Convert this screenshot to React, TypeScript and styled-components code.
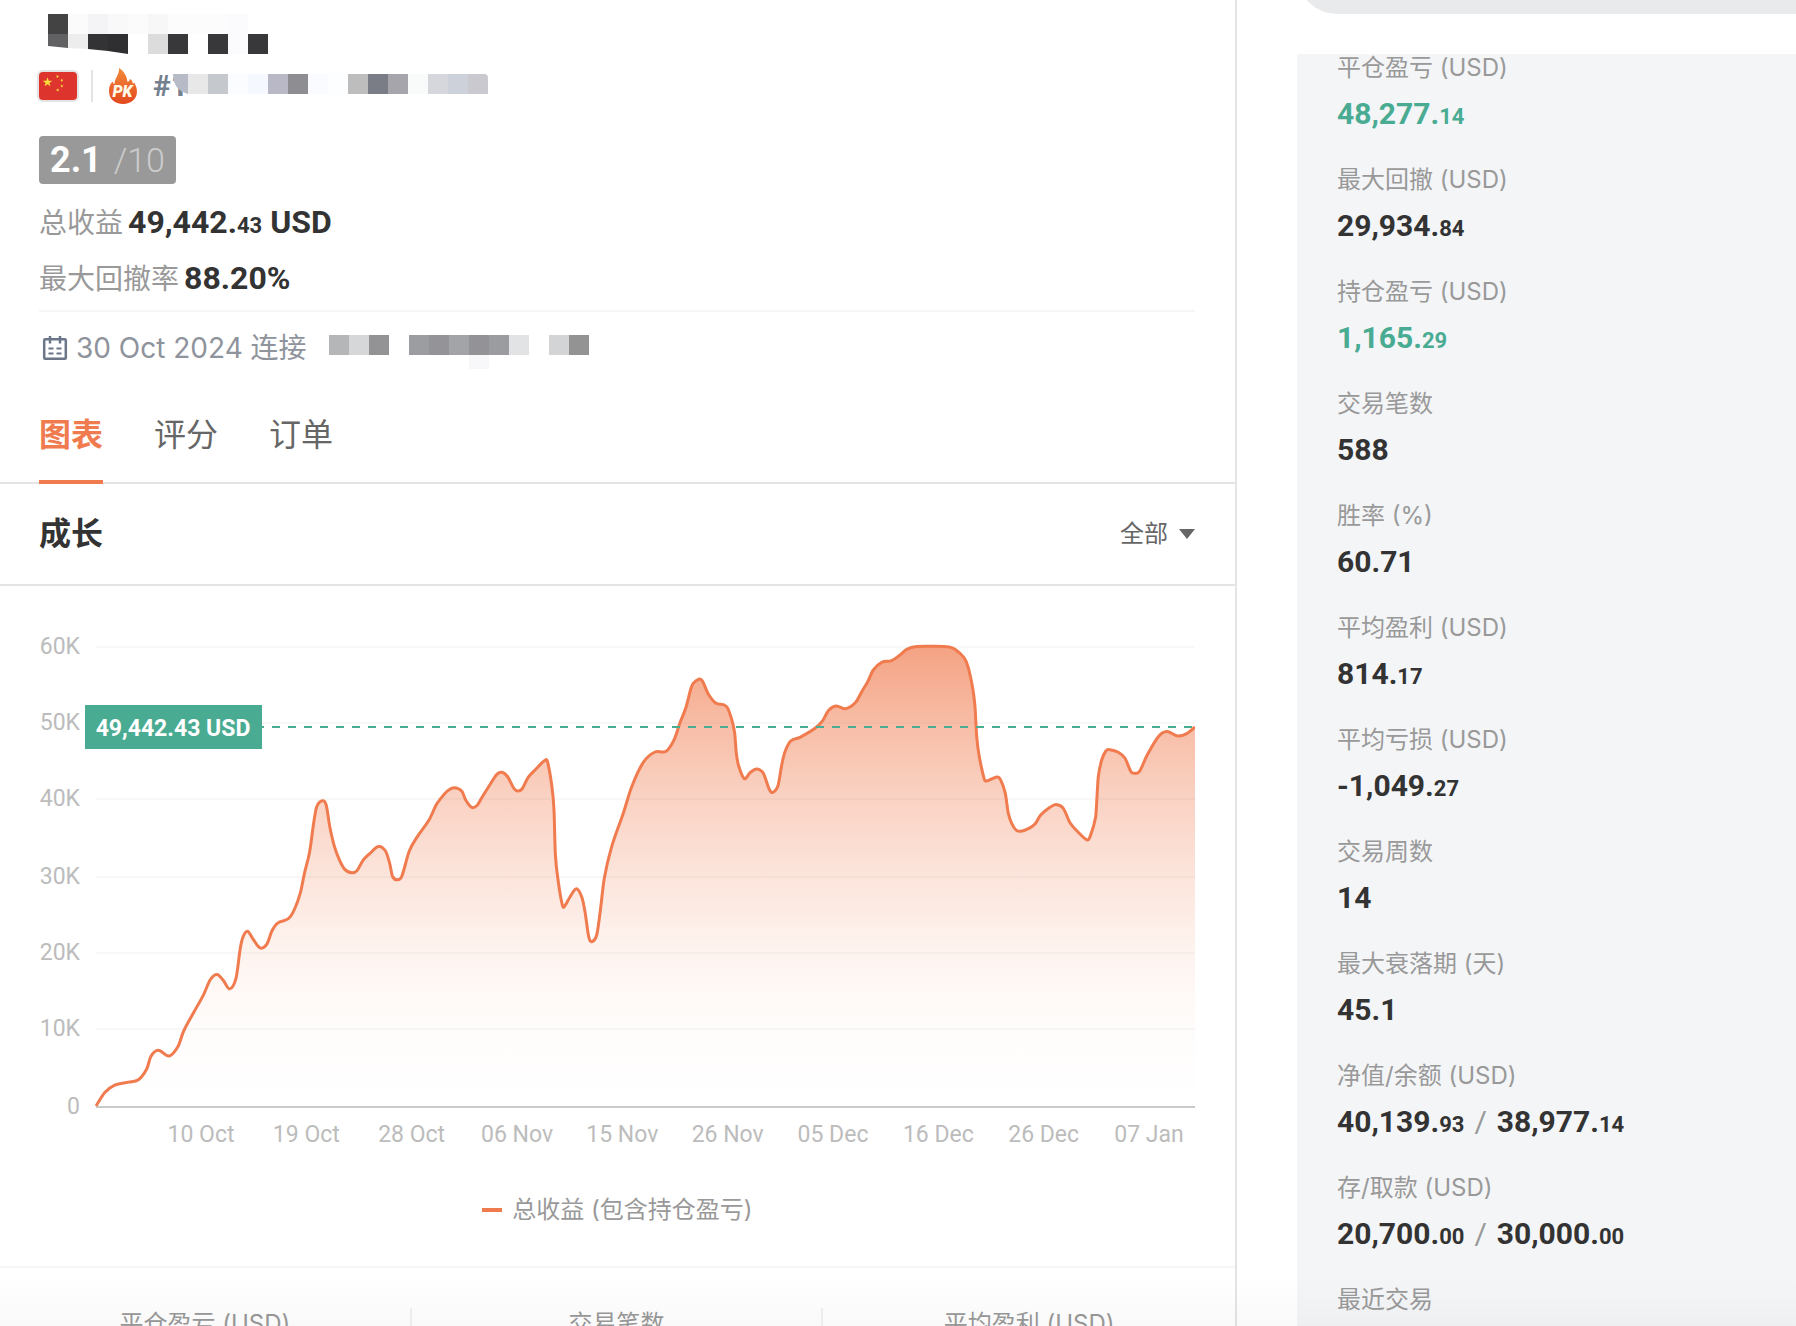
import React, { useState } from "react";
import styled, { createGlobalStyle, css } from "styled-components";

const color = {
  orange: "#f07b4e",
  green: "#4aab93",
  ink: "#333333",
  text: "#666666",
  label: "#999999",
  axis: "#bcbcbc",
  line: "#e4e4e4",
  faint: "#f6f6f6",
  slate: "#75808f",
  panel: "#f4f5f7",
};

const uiFont = `Inter, "Noto Sans CJK SC", sans-serif`;
const numberFont = `Roboto, "Noto Sans CJK SC", sans-serif`;

const GlobalStyle = createGlobalStyle`
  *, *::before, *::after { box-sizing: border-box; }
  body { margin: 0; background: #ffffff; font-family: ${uiFont}; color: ${color.ink}; }
  button, select { font: inherit; color: inherit; }
`;

/* ---------- page frame ---------- */

const Page = styled.div`
  position: relative;
  display: grid;
  grid-template-columns: minmax(0, 1fr) 559px;
  height: 100vh;
  overflow: hidden;

  &::after {
    content: "";
    position: absolute;
    inset: auto 0 0 0;
    height: 48px;
    background: linear-gradient(rgba(0, 0, 0, 0), rgba(0, 0, 0, 0.025));
    pointer-events: none;
  }
`;

const Main = styled.main`
  min-width: 0;
  border-right: 2px solid ${color.line};
`;

const Aside = styled.aside`
  display: flex;
  flex-direction: column;
  padding-left: 60px;
`;

/* ---------- profile header ---------- */

const Header = styled.header`
  display: flex;
  flex-direction: column;
  align-items: flex-start;
  margin: 0 40px 0 39px;
  padding: 14px 0 4px;
  border-bottom: 2px solid ${color.faint};
`;

const HiddenName = styled.svg`
  display: block;
  margin-left: 9px;
`;

const MetaRow = styled.div`
  display: flex;
  align-items: center;
  height: 38px;
  margin-top: 13px;
`;

const FlagFrame = styled.span`
  display: flex;
  margin-left: -2px;
  padding: 2px;
  border-radius: 6px;
  background: ${color.line};
`;

const Divider = styled.span`
  width: 2px;
  height: 32px;
  margin: 0 16px 0 12px;
  background: ${color.line};
`;

const Rank = styled.span`
  position: relative;
  margin-left: 16px;
  font: 700 30px/38px ${numberFont};
  color: ${color.slate};

  svg {
    position: absolute;
    left: 15px;
    top: 7px;
  }
`;

const Score = styled.div`
  display: flex;
  align-items: center;
  gap: 12px;
  height: 48px;
  margin: 31px 0 10px;
  padding: 0 11px;
  border-radius: 4px;
  background: #999999;
  font: 700 36px/48px ${numberFont};
  color: #ffffff;
`;

const ScoreMax = styled.span`
  font-size: 34px;
  font-weight: 300;
  color: rgba(255, 255, 255, 0.5);
`;

const Summary = styled.p`
  display: flex;
  align-items: baseline;
  gap: 5px;
  height: 56px;
  margin: 0;
  font-size: 28px;
  line-height: 56px;
  color: ${color.label};
`;

const numberText = css`
  font-family: ${numberFont};

  small {
    font-size: 22px;
    line-height: 1;
  }
`;

const SummaryValue = styled.strong`
  ${numberText}
  font-size: 32px;
  font-weight: 700;
  color: ${color.ink};
`;

const Connected = styled.div`
  display: flex;
  align-items: center;
  gap: 8px;
  height: 40px;
  margin: 16px 40px 0 39px;
  padding-left: 3px;
  font-size: 28px;
  line-height: 40px;
  color: #8e939c;
`;

const HiddenBroker = styled.svg`
  flex: none;
  margin-left: 14px;
`;

/* ---------- tabs and section bar ---------- */

const Tabs = styled.div`
  display: flex;
  gap: 51px;
  margin-top: 20px;
  padding: 0 39px;
  border-bottom: 2px solid ${color.line};
`;

const Tab = styled.button<{ $active: boolean }>`
  height: 96px;
  margin: 0 0 -2px;
  padding: 0 0 4px;
  border: 0;
  border-bottom: 4px solid ${(p) => (p.$active ? color.orange : "transparent")};
  background: none;
  font-size: 32px;
  font-weight: ${(p) => (p.$active ? 700 : 400)};
  color: ${(p) => (p.$active ? color.orange : color.text)};
  cursor: pointer;
`;

const SectionBar = styled.div`
  display: flex;
  align-items: center;
  justify-content: space-between;
  height: 102px;
  padding: 0 40px 0 39px;
  border-bottom: 2px solid ${color.line};
`;

const SectionTitle = styled.h2`
  margin: 0;
  font-size: 32px;
  line-height: 40px;
  font-weight: 700;
`;

const Picker = styled.label`
  display: grid;
  align-items: center;
  color: ${color.text};

  select,
  svg {
    grid-area: 1 / 1;
  }
  select {
    appearance: none;
    padding: 0 27px 0 0;
    border: 0;
    background: none;
    font-size: 24px;
    line-height: 36px;
  }
  svg {
    justify-self: end;
    pointer-events: none;
  }
`;

/* ---------- chart ---------- */

const Figure = styled.figure`
  margin: 0;
  padding-bottom: 38px;
  border-bottom: 2px solid ${color.faint};
`;

const ChartArea = styled.div`
  padding: 0 40px 0 39px;
`;

const ChartSvg = styled.svg`
  display: block;
  width: 100%;
  height: auto;
  font-family: ${numberFont};
  font-size: 23px;
`;

const Legend = styled.figcaption`
  display: flex;
  align-items: center;
  justify-content: center;
  gap: 10px;
  height: 36px;
  margin-top: 36px;
  font-size: 24px;
  line-height: 36px;
  color: ${color.label};

  &::before {
    content: "";
    width: 20px;
    height: 4px;
    background: ${color.orange};
  }
`;

const Totals = styled.ul`
  display: grid;
  grid-template-columns: repeat(3, 1fr);
  margin: 40px 0 0;
  padding: 0;
  list-style: none;
`;

const Total = styled.li`
  border-right: 2px solid #f1f1f1;
  font-size: 24px;
  line-height: 32px;
  text-align: center;
  color: ${color.label};

  &:last-child {
    border-right: 0;
  }
`;

/* ---------- statistics panel ---------- */

const PillWindow = styled.div`
  display: flex;
  align-items: flex-end;
  flex: none;
  height: 14px;
  margin-bottom: 40px;
  overflow: hidden;
`;

const Pill = styled.div`
  flex: 1;
  height: 80px;
  border-radius: 40px 0 0 40px;
  background: #e9eaec;
`;

const Stats = styled.dl`
  display: flex;
  flex-direction: column;
  gap: 32px;
  flex: 1;
  margin: 0;
  padding-left: 40px;
  background: ${color.panel};
`;

const StatLabel = styled.dt`
  height: 28px;
  font-size: 24px;
  line-height: 28px;
  color: ${color.label};
`;

const StatValue = styled.dd<{ $gain?: boolean }>`
  ${numberText}
  display: flex;
  align-items: baseline;
  gap: 10px;
  height: 40px;
  margin: 12px 0 0;
  font-size: 30px;
  line-height: 40px;
  font-weight: 700;
  color: ${(p) => (p.$gain ? color.green : color.ink)};
`;

const Slash = styled.span`
  font-weight: 400;
  color: ${color.label};
`;

/* ---------- data ---------- */

type Stat = { label: string; values?: string[]; split?: boolean; gain?: boolean };

const stats: Stat[] = [
  { label: "平仓盈亏 (USD)", values: ["48,277.14"], split: true, gain: true },
  { label: "最大回撤 (USD)", values: ["29,934.84"], split: true },
  { label: "持仓盈亏 (USD)", values: ["1,165.29"], split: true, gain: true },
  { label: "交易笔数", values: ["588"] },
  { label: "胜率 (%)", values: ["60.71"] },
  { label: "平均盈利 (USD)", values: ["814.17"], split: true },
  { label: "平均亏损 (USD)", values: ["-1,049.27"], split: true },
  { label: "交易周数", values: ["14"] },
  { label: "最大衰落期 (天)", values: ["45.1"] },
  { label: "净值/余额 (USD)", values: ["40,139.93", "38,977.14"], split: true },
  { label: "存/取款 (USD)", values: ["20,700.00", "30,000.00"], split: true },
  { label: "最近交易" },
];

const totals = ["平仓盈亏 (USD)", "交易笔数", "平均盈利 (USD)"];
const tabs = ["图表", "评分", "订单"];

const yTicks = [
  { label: "60K", y: 647 },
  { label: "50K", y: 723 },
  { label: "40K", y: 799 },
  { label: "30K", y: 877 },
  { label: "20K", y: 953 },
  { label: "10K", y: 1029 },
  { label: "0", y: 1107 },
];

const xTicks = [
  "10 Oct", "19 Oct", "28 Oct", "06 Nov", "15 Nov",
  "26 Nov", "05 Dec", "16 Dec", "26 Dec", "07 Jan",
];

const points: [number, number][] = [
  [96, 1106], [104.8, 1092.5], [114.7, 1085.1], [128.5, 1082.1], [138.4, 1079.8], [146.7, 1069],
  [151, 1056.3], [158.2, 1050.3], [169.2, 1056], [178, 1046.6], [183.5, 1031.5], [193.8, 1012.3],
  [203.6, 994.6], [210.4, 979.5], [217.1, 974.4], [223.4, 980.5], [229.7, 988.9], [236.1, 977.8],
  [240.4, 947.6], [243.2, 936.5], [247.5, 931.2], [253.1, 939.2], [260.2, 947.9], [266.9, 944.2],
  [272, 930.8], [277.6, 923.1], [288.7, 918.4], [294.6, 909], [300.5, 892.3], [304.5, 873.1],
  [309.6, 852], [313.6, 823.5], [316.7, 806.7], [322.3, 800.7], [326.2, 805], [329.8, 826.8],
  [334.1, 845.3], [339.3, 859.7], [344.8, 869.4], [351.9, 872.8], [357.1, 870.4], [363, 860.4],
  [369.7, 853.7], [378.4, 846.6], [385.5, 851], [389.5, 862.7], [392.6, 876.5], [397.4, 879.8],
  [401.7, 876.5], [409.3, 851], [417.2, 836.9], [429, 820.1], [436.1, 805], [440.1, 799.3],
  [447.8, 790.7], [454.3, 787.7], [461.9, 791.3], [465.7, 800], [471.7, 807.4], [477, 805.5],
  [481, 799], [491.8, 781.7], [496.8, 774.3], [502, 772.3], [507.5, 776.5], [514, 788.5],
  [517.8, 791], [522, 789], [528, 777.7], [535, 770], [545.7, 759.7], [547.7, 762.3],
  [551.7, 785], [554, 810], [555.3, 853.3], [558.3, 881.7], [562.3, 905], [564, 907],
  [570, 897], [576.3, 888.7], [581.7, 896.7], [585, 911.7], [588.7, 936.7], [591.7, 941.7],
  [596.7, 935], [600, 913.3], [604.3, 878.3], [611.7, 846.7], [623.3, 813.3], [631.7, 786.7],
  [643.3, 762.3], [655, 752], [666, 751.3], [674.3, 739.3], [680, 722.7], [686, 707.3],
  [691, 688.3], [693.3, 683.3], [699.3, 679], [702.3, 680.7], [708.3, 694], [715.7, 703],
  [726.7, 706.7], [731.7, 719.3], [734.7, 733.3], [736.3, 753.3], [738.7, 766], [744.3, 778.7],
  [750, 772.7], [756.7, 769], [763.3, 773.3], [769.3, 789.3], [772.3, 792.5], [778, 785.7],
  [781.7, 765], [785, 751.7], [790.7, 741], [800, 737.3], [815, 728.3], [822.7, 720.7],
  [828.3, 710.7], [836, 706], [845.7, 708.7], [855.7, 702.3], [861.7, 691.7], [867.7, 681.7],
  [873.3, 670], [881.7, 662.3], [891.7, 660.7], [900, 655], [906.7, 649.3], [916.7, 646.6],
  [933.3, 646.3], [949, 647], [955, 649.3], [964, 657.7], [968, 666.7], [972.7, 688.3],
  [975, 706.7], [976.7, 736.7], [979.3, 756.7], [984.3, 779.3], [986, 781], [991.7, 779],
  [997.7, 777], [1001, 780.7], [1005.3, 793.3], [1008.3, 813.3], [1011.7, 823.3], [1016, 830],
  [1020.7, 831.3], [1028.3, 828.7], [1035, 824], [1040.7, 815], [1050, 807.3], [1056, 804.5],
  [1063.3, 808.3], [1070, 822.7], [1080, 834], [1087.3, 840], [1090, 836.7], [1095.7, 816.7],
  [1097, 796.7], [1098.3, 776.7], [1101.7, 760], [1106, 750.7], [1110, 749.7], [1118.3, 752.3],
  [1125, 758.3], [1131, 771.7], [1134.3, 773.3], [1139.3, 771.7], [1146.7, 756], [1158.3, 736.7],
  [1166.7, 731.5], [1177.7, 736], [1186.7, 733.7], [1195, 727],
];

/* Joins the points with cubic segments whose handles follow the neighbouring points. */
function smoothPath(list: [number, number][]) {
  let d = `M${list[0][0]} ${list[0][1]}`;
  for (let i = 0; i < list.length - 1; i++) {
    const before = list[Math.max(i - 1, 0)];
    const from = list[i];
    const to = list[i + 1];
    const after = list[Math.min(i + 2, list.length - 1)];
    const span = to[0] - from[0];
    const handle = (a: [number, number], b: [number, number]) => {
      const slope = (b[1] - a[1]) / (b[0] - a[0]);
      return (slope * span) / 3;
    };
    const y1 = from[1] + handle(before, to);
    const y2 = to[1] - handle(from, after);
    d += `C${from[0] + span / 3} ${y1} ${to[0] - span / 3} ${y2} ${to[0]} ${to[1]}`;
  }
  return d;
}

const linePath = smoothPath(points);
const areaPath = `${linePath}V1107H96Z`;

const fillStops = [
  [0, 0.7], [0.17, 0.5], [0.33, 0.34], [0.5, 0.2], [0.66, 0.09], [0.83, 0.02], [1, 0],
];

/* ---------- drawings ---------- */

const Cells = ({ fills, y = 0 }: { fills: string[]; y?: number }) => (
  <>
    {fills.map((fill, i) => (
      <rect key={i} x={i * 20} y={y} width="20" height="20" fill={fill} />
    ))}
  </>
);

const NameMosaic = () => (
  <HiddenName width="220" height="40" shapeRendering="crispEdges" aria-hidden="true">
    <Cells fills={["#434343", "#fbfbfb", "#f4f4f6", "#f9f9f9", "#fbfbfb", "#f7f7f7", "#fcfcfc", "#fcfcfc", "#fcfcfc", "#fbfbfe"]} />
    <Cells y={20} fills={["#616163", "#ededee", "#333335", "#2f2f31", "#ffffff", "#dcdcdc", "#38383a", "#ffffff", "#38383a", "#fbfbfe", "#38383a"]} />
    <path d="M0 32L20 34L40 35L60 37L80 40H0Z" fill="#ffffff" shapeRendering="auto" />
  </HiddenName>
);

const RankMosaic = () => (
  <svg width="320" height="20" aria-hidden="true">
    <path d="M5 0H20V20Q5 16 5 0Z" fill="#b6bbc7" />
    <g transform="translate(20 0)" shapeRendering="crispEdges">
      <Cells fills={["#e8e8e8", "#c5c8cd", "#fbfcff", "#f5f8ff", "#b8b8c6", "#8d8d92", "#f9fbff", "#fdfeff", "#bcbdbc", "#7a7c86", "#a5a5ab", "#f9fafa", "#d6d7dc", "#ccd1da"]} />
    </g>
    <path d="M300 0H316Q320 0 320 4V20H300Z" fill="#c9c9cf" />
  </svg>
);

const BrokerMosaic = () => (
  <HiddenBroker width="260" height="41" viewBox="0 -7 260 41" shapeRendering="crispEdges" aria-hidden="true">
    <Cells fills={["#b5b6b8", "#d6d7d9", "#939396", "#ffffff", "#9c9da0", "#939398", "#a3a4a7", "#939397", "#9b9c9f", "#e2e3e5", "#ffffff", "#d3d4d6", "#939394"]} />
    <rect x="140" y="20" width="20" height="14" fill="#f8f8fb" />
  </HiddenBroker>
);

const star = "M0 -5L1.2 -1.6L4.8 -1.5L1.9 0.6L2.9 4L0 2L-2.9 4L-1.9 0.6L-4.8 -1.5L-1.2 -1.6Z";

const ChinaFlag = () => (
  <FlagFrame>
    <svg width="38" height="28" role="img" aria-label="中国">
      <rect width="38" height="28" rx="4" fill="#dd352e" />
      <g fill="#f9dc3c">
        <path d={star} transform="translate(8.500 10.300)" />
        <path d={star} transform="translate(18.500 4.500) rotate(25) scale(0.350)" />
        <path d={star} transform="translate(22.800 8.300) rotate(-10) scale(0.350)" />
        <path d={star} transform="translate(22.800 14) scale(0.350)" />
        <path d={star} transform="translate(18.700 18) rotate(20) scale(0.350)" />
      </g>
    </svg>
  </FlagFrame>
);

const PkFlame = () => (
  <svg width="28" height="36" viewBox="0 0 28 36" role="img" aria-label="PK">
    <defs>
      <linearGradient id="flame" x1="0" y1="0" x2="0" y2="1">
        <stop offset="0" stopColor="#f08a3a" />
        <stop offset="0.5" stopColor="#ec6a2c" />
        <stop offset="1" stopColor="#e2481f" />
      </linearGradient>
    </defs>
    <path
      d="M10 0C15 3 18 8 18.500 14C20 13.500 20.800 12.400 21 11C23 12 23.800 13.500 23.600 15.500C24.600 15.400 25.200 15 25.600 14.500C26 17 28 19 28 23.500C28 31 22 36 14 36C6 36 0 31 0 23C0 18 1.500 16 3.500 13.500C4 15 4.600 15.700 5.500 16C5.500 10 10.500 7 10 0Z"
      fill="url(#flame)"
    />
    <text x="13.500" y="29" textAnchor="middle" fontFamily="Roboto, sans-serif" fontSize="16" fontWeight="900" fontStyle="italic" fill="#fffbe8">
      PK
    </text>
  </svg>
);

const CalendarIcon = () => (
  <svg width="26" height="26" viewBox="0 0 26 26" fill="none" stroke="#6b7789" strokeWidth="2.500" aria-hidden="true">
    <rect x="2.200" y="4.200" width="21.600" height="19.600" rx="1" />
    <path d="M8 1V8.500M18 1V8.500" />
    <path d="M6.500 13.500H11.500M14.500 13.500H19.500M6.500 18.500H11.500M14.500 18.500H19.500" strokeWidth="2" />
  </svg>
);

const GrowthChart = () => (
  <ChartSvg viewBox="39 586 1156 570" role="img" aria-label="总收益 (包含持仓盈亏)">
    <defs>
      <linearGradient id="growth" gradientUnits="userSpaceOnUse" x1="0" y1="646" x2="0" y2="1107">
        {fillStops.map(([offset, opacity]) => (
          <stop key={offset} offset={offset} stopColor={color.orange} stopOpacity={opacity} />
        ))}
      </linearGradient>
    </defs>
    {yTicks.map(({ label, y }) => (
      <g key={label}>
        <line x1="96" x2="1195" y1={y} y2={y} stroke={label === "0" ? "#cacaca" : "#f7f7f7"} strokeWidth="2" />
        <text x="80" y={y + 7} textAnchor="end" fill={color.axis}>{label}</text>
      </g>
    ))}
    {xTicks.map((label, i) => (
      <text key={label} x={201 + (i * 948) / 9} y="1142" textAnchor="middle" fill={color.axis}>{label}</text>
    ))}
    <path d={areaPath} fill="url(#growth)" />
    <path d={linePath} fill="none" stroke={color.orange} strokeWidth="3" strokeLinejoin="round" />
    <line x1="256" x2="1195" y1="727" y2="727" stroke={color.green} strokeWidth="2" strokeDasharray="8 8" />
    <rect x="85" y="705" width="177" height="44" fill={color.green} />
    <text x="173" y="736" textAnchor="middle" fontWeight="700" fill="#ffffff">49,442.43 USD</text>
  </ChartSvg>
);

const Amount = ({ value, split }: { value: string; split?: boolean }) => {
  if (!split) return <span>{value}</span>;
  const [whole, cents] = value.split(".");
  return (
    <span>
      {whole}.<small>{cents}</small>
    </span>
  );
};

/* ---------- screen ---------- */

export default function App() {
  const [active, setActive] = useState(tabs[0]);

  return (
    <>
      <GlobalStyle />
      <Page>
        <Main>
          <Header>
            <NameMosaic />
            <MetaRow>
              <ChinaFlag />
              <Divider />
              <PkFlame />
              <Rank>
                #1
                <RankMosaic />
              </Rank>
            </MetaRow>
            <Score>
              2.1<ScoreMax>/10</ScoreMax>
            </Score>
            <Summary>
              总收益
              <SummaryValue>
                <Amount value="49,442.43" split /> USD
              </SummaryValue>
            </Summary>
            <Summary>
              最大回撤率<SummaryValue>88.20%</SummaryValue>
            </Summary>
          </Header>
          <Connected>
            <CalendarIcon />
            30 Oct 2024 连接
            <BrokerMosaic />
          </Connected>

          <Tabs role="tablist">
            {tabs.map((name) => (
              <Tab
                key={name}
                type="button"
                role="tab"
                aria-selected={name === active}
                $active={name === active}
                onClick={() => setActive(name)}
              >
                {name}
              </Tab>
            ))}
          </Tabs>

          <SectionBar>
            <SectionTitle>成长</SectionTitle>
            <Picker>
              <select aria-label="成长" defaultValue="all">
                <option value="all">全部</option>
              </select>
              <svg width="16" height="10" aria-hidden="true">
                <path d="M0 0H16L8 10Z" fill={color.text} />
              </svg>
            </Picker>
          </SectionBar>

          <Figure>
            <ChartArea>
              <GrowthChart />
            </ChartArea>
            <Legend>总收益 (包含持仓盈亏)</Legend>
          </Figure>

          <Totals>
            {totals.map((name) => (
              <Total key={name}>{name}</Total>
            ))}
          </Totals>
        </Main>

        <Aside>
          <PillWindow>
            <Pill />
          </PillWindow>
          <Stats>
            {stats.map(({ label, values, split, gain }) => (
              <div key={label}>
                <StatLabel>{label}</StatLabel>
                {values && (
                  <StatValue $gain={gain}>
                    {values.map((value, i) => (
                      <React.Fragment key={value}>
                        {i > 0 && <Slash>/</Slash>}
                        <Amount value={value} split={split} />
                      </React.Fragment>
                    ))}
                  </StatValue>
                )}
              </div>
            ))}
          </Stats>
        </Aside>
      </Page>
    </>
  );
}
